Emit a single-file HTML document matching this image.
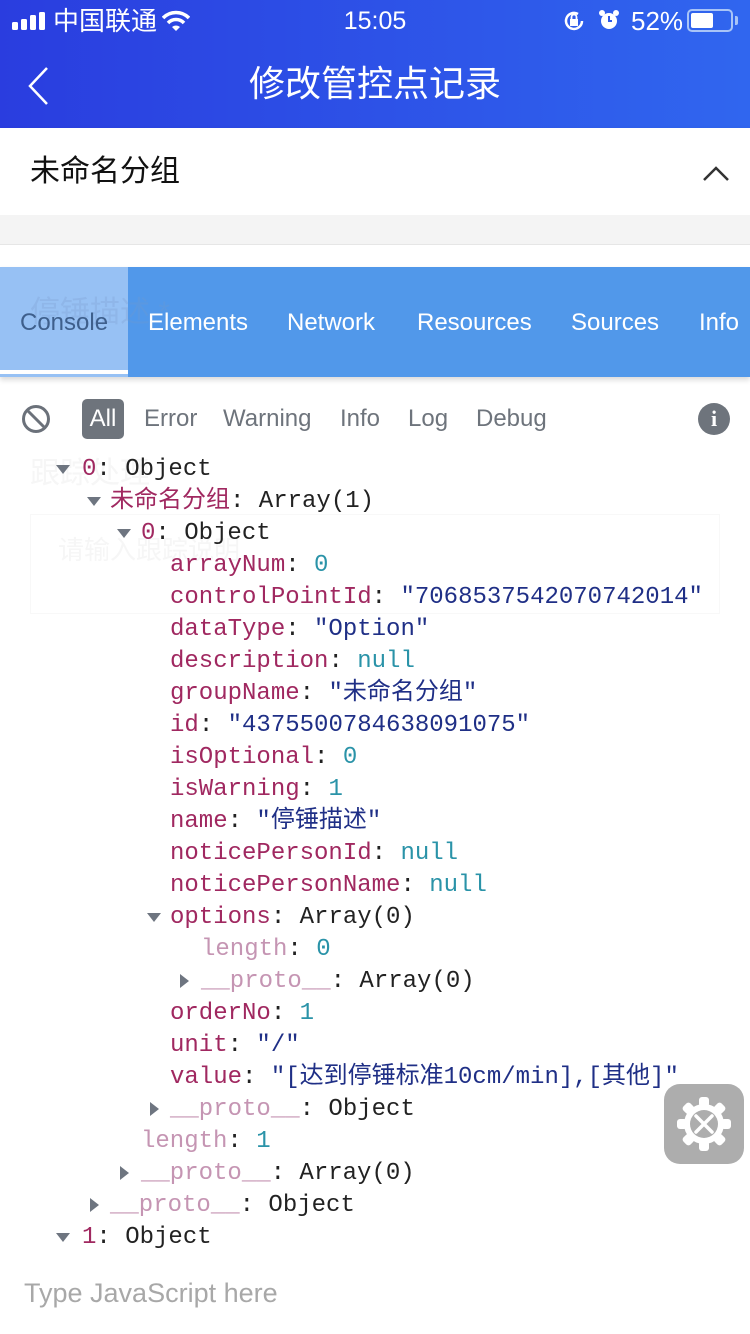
<!DOCTYPE html>
<html><head><meta charset="utf-8">
<style>
*{margin:0;padding:0;box-sizing:border-box}
body{width:750px;height:1334px;position:relative;overflow:hidden;background:#fff;font-family:"Liberation Sans","Noto Sans CJK SC",sans-serif}
.hdr{position:absolute;left:0;top:0;width:750px;height:128px;background:linear-gradient(90deg,#2a3ddf,#3066ef)}
.sb{position:absolute;top:6px;color:#fff;font-size:26px;line-height:30px}
.title{position:absolute;top:62px;left:0;width:750px;text-align:center;color:#fff;font-size:36px;line-height:44px}
.sec{position:absolute;left:0;top:128px;width:750px;height:87px;background:#fff;box-shadow:0 3px 6px rgba(0,0,0,.12)}
.gap{position:absolute;left:0;top:215px;width:750px;height:30px;background:#f4f4f4;border-bottom:1px solid #e6e6e6}
.tabs{position:absolute;left:0;top:267px;width:750px;height:110px;background:#5198ea;box-shadow:0 3px 5px rgba(0,0,0,.15)}
.tab{position:absolute;top:41px;color:#fff;font-size:24px;line-height:30px}
.ln{position:absolute;font-family:"Liberation Mono","Noto Sans CJK SC",monospace;font-size:24px;line-height:32px;white-space:pre;color:#222}
.k{color:#a02860}.p{color:#c595b3}.s{color:#1f2f86}.n{color:#2a93a8}
.tri{position:absolute;width:0;height:0}
.td{border-left:7px solid transparent;border-right:7px solid transparent;border-top:9px solid #6e7580}
.tr{border-top:7px solid transparent;border-bottom:7px solid transparent;border-left:9px solid #6e7580}
.ghost{position:absolute;color:#f6f6f6;font-size:30px}
.f{position:absolute;top:404px;font-size:24px;line-height:30px;color:#6e747c}
</style></head><body>
<div class="hdr">
 <svg style="position:absolute;left:12px;top:12px" width="36" height="18"><rect x="0" y="10" width="6" height="8" rx="1.5" fill="#fff"/><rect x="9" y="7" width="6" height="11" rx="1.5" fill="#fff"/><rect x="18" y="3" width="6" height="15" rx="1.5" fill="#fff"/><rect x="27" y="0" width="6" height="18" rx="1.5" fill="#fff"/></svg>
 <div class="sb" style="left:53px">中国联通</div>
 <svg style="position:absolute;left:162px;top:10px" width="28" height="22" viewBox="0 0 28 22"><path d="M1 8 A18 18 0 0 1 27 8" stroke="#fff" stroke-width="3.5" fill="none"/><path d="M6 13 A11 11 0 0 1 22 13" stroke="#fff" stroke-width="3.5" fill="none"/><path d="M10 17 L14 21 L18 17 A6 6 0 0 0 10 17Z" fill="#fff"/></svg>
 <div class="sb" style="left:0;width:750px;text-align:center;font-size:25px">15:05</div>
 <svg style="position:absolute;left:562px;top:9px" width="24" height="24" viewBox="0 0 24 24"><path d="M20 12A8 8 0 1 1 16 5" stroke="#fff" stroke-width="2.5" fill="none"/><rect x="8" y="10" width="8" height="7" fill="#fff"/><path d="M9.5 10V8a2.5 2.5 0 0 1 5 0v2" stroke="#fff" stroke-width="1.8" fill="none"/></svg>
 <svg style="position:absolute;left:597px;top:8px" width="24" height="24" viewBox="0 0 24 24"><circle cx="12" cy="13" r="8" fill="#fff"/><path d="M12 8v5h3" stroke="#2f5ae8" stroke-width="2" fill="none"/><circle cx="5" cy="5" r="3" fill="#fff"/><circle cx="19" cy="5" r="3" fill="#fff"/></svg>
 <div class="sb" style="left:631px">52%</div>
 <div style="position:absolute;left:687px;top:9px;width:46px;height:23px;border:2px solid #a8c4f7;border-radius:5px"><div style="position:absolute;left:2px;top:2px;width:22px;height:15px;background:#fff;border-radius:2px"></div></div>
 <div style="position:absolute;left:735px;top:16px;width:3px;height:9px;background:#a8c4f7;border-radius:0 2px 2px 0"></div>
 <svg style="position:absolute;left:26px;top:66px" width="24" height="40"><path d="M21 2 L4 20 L21 38" stroke="#fff" stroke-width="2.5" fill="none"/></svg>
 <div class="title">修改管控点记录</div>
</div>
<div class="sec">
 <div style="position:absolute;left:30px;top:24px;font-size:30px;line-height:40px;color:#111">未命名分组</div>
 <svg style="position:absolute;left:702px;top:36px" width="28" height="18"><path d="M2 16 L14 4 L26 16" stroke="#333" stroke-width="2.5" fill="none"/></svg>
</div>
<div class="gap"></div>
<div class="ghost" style="left:30px;top:448px">跟踪处理</div>
<div class="ghost" style="left:58px;top:530px;font-size:26px">请输入跟踪说明</div>
<div style="position:absolute;left:30px;top:514px;width:690px;height:100px;border:1px solid #f8f8f8"></div>
<div class="tabs">
 <div style="position:absolute;left:0;top:0;width:128px;height:110px;background:#97c1f4"></div>
 <div style="position:absolute;left:0;top:103px;width:128px;height:4px;background:#fff"></div>
 <div style="position:absolute;left:30px;top:20px;font-size:30px;color:rgba(120,150,200,.25)">停锤描述 *</div>
 <div class="tab" style="left:20px;color:#3e5f8c">Console</div>
 <div class="tab" style="left:148px">Elements</div>
 <div class="tab" style="left:287px">Network</div>
 <div class="tab" style="left:417px">Resources</div>
 <div class="tab" style="left:571px">Sources</div>
 <div class="tab" style="left:699px">Info</div>
</div>
<svg style="position:absolute;left:21px;top:404px" width="30" height="30" viewBox="0 0 30 30"><circle cx="15" cy="15" r="12.5" stroke="#6b717a" stroke-width="3" fill="none"/><path d="M6 6 L24 24" stroke="#6b717a" stroke-width="3"/></svg>
<div style="position:absolute;left:82px;top:399px;width:42px;height:40px;background:#6e747c;border-radius:5px;color:#fff;font-size:24px;line-height:40px;text-align:center">All</div>
<div class="f" style="left:144px">Error</div>
<div class="f" style="left:223px">Warning</div>
<div class="f" style="left:340px">Info</div>
<div class="f" style="left:408px">Log</div>
<div class="f" style="left:476px">Debug</div>
<div style="position:absolute;left:698px;top:403px;width:32px;height:32px;border-radius:50%;background:#6e747c;color:#fff;font-weight:bold;font-size:22px;line-height:32px;text-align:center;font-family:'Liberation Serif',serif">i</div>

<div class="tri td" style="left:56px;top:465px"></div><div class="ln" style="left:82px;top:454px"><span class="k">0</span>: Object</div>
<div class="tri td" style="left:87px;top:497px"></div><div class="ln" style="left:110px;top:486px"><span class="k">未命名分组</span>: Array(1)</div>
<div class="tri td" style="left:117px;top:529px"></div><div class="ln" style="left:141px;top:518px"><span class="k">0</span>: Object</div>
<div class="ln" style="left:170px;top:550px"><span class="k">arrayNum</span>: <span class="n">0</span></div>
<div class="ln" style="left:170px;top:582px"><span class="k">controlPointId</span>: <span class="s">"7068537542070742014"</span></div>
<div class="ln" style="left:170px;top:614px"><span class="k">dataType</span>: <span class="s">"Option"</span></div>
<div class="ln" style="left:170px;top:646px"><span class="k">description</span>: <span class="n">null</span></div>
<div class="ln" style="left:170px;top:678px"><span class="k">groupName</span>: <span class="s">"未命名分组"</span></div>
<div class="ln" style="left:170px;top:710px"><span class="k">id</span>: <span class="s">"4375500784638091075"</span></div>
<div class="ln" style="left:170px;top:742px"><span class="k">isOptional</span>: <span class="n">0</span></div>
<div class="ln" style="left:170px;top:774px"><span class="k">isWarning</span>: <span class="n">1</span></div>
<div class="ln" style="left:170px;top:806px"><span class="k">name</span>: <span class="s">"停锤描述"</span></div>
<div class="ln" style="left:170px;top:838px"><span class="k">noticePersonId</span>: <span class="n">null</span></div>
<div class="ln" style="left:170px;top:870px"><span class="k">noticePersonName</span>: <span class="n">null</span></div>
<div class="tri td" style="left:147px;top:913px"></div><div class="ln" style="left:170px;top:902px"><span class="k">options</span>: Array(0)</div>
<div class="ln" style="left:201px;top:934px"><span class="p">length</span>: <span class="n">0</span></div>
<div class="tri tr" style="left:180px;top:974px"></div><div class="ln" style="left:201px;top:966px"><span class="p">__proto__</span>: Array(0)</div>
<div class="ln" style="left:170px;top:998px"><span class="k">orderNo</span>: <span class="n">1</span></div>
<div class="ln" style="left:170px;top:1030px"><span class="k">unit</span>: <span class="s">"/"</span></div>
<div class="ln" style="left:170px;top:1062px"><span class="k">value</span>: <span class="s">"[达到停锤标准10cm/min],[其他]"</span></div>
<div class="tri tr" style="left:150px;top:1102px"></div><div class="ln" style="left:170px;top:1094px"><span class="p">__proto__</span>: Object</div>
<div class="ln" style="left:141px;top:1126px"><span class="p">length</span>: <span class="n">1</span></div>
<div class="tri tr" style="left:120px;top:1166px"></div><div class="ln" style="left:141px;top:1158px"><span class="p">__proto__</span>: Array(0)</div>
<div class="tri tr" style="left:90px;top:1198px"></div><div class="ln" style="left:110px;top:1190px"><span class="p">__proto__</span>: Object</div>
<div class="tri td" style="left:56px;top:1233px"></div><div class="ln" style="left:82px;top:1222px"><span class="k">1</span>: Object</div>

<div style="position:absolute;left:24px;top:1276px;font-size:27px;line-height:34px;color:#a8a8a8">Type JavaScript here</div>

<div style="position:absolute;left:664px;top:1084px;width:80px;height:80px;border-radius:16px;background:#adadad">
 <svg width="80" height="80" viewBox="0 0 80 80">
  <g transform="translate(40,40)">
   <g fill="#fff">
    <rect x="-5" y="-27" width="10" height="10" rx="3"/><rect x="-5" y="-27" width="10" height="10" rx="3" transform="rotate(45)"/><rect x="-5" y="-27" width="10" height="10" rx="3" transform="rotate(90)"/><rect x="-5" y="-27" width="10" height="10" rx="3" transform="rotate(135)"/><rect x="-5" y="-27" width="10" height="10" rx="3" transform="rotate(180)"/><rect x="-5" y="-27" width="10" height="10" rx="3" transform="rotate(225)"/><rect x="-5" y="-27" width="10" height="10" rx="3" transform="rotate(270)"/><rect x="-5" y="-27" width="10" height="10" rx="3" transform="rotate(315)"/>
    <circle r="20"/>
   </g>
   <circle r="14" fill="#adadad"/>
   <path d="M-8 -8 L8 8 M8 -8 L-8 8" stroke="#fff" stroke-width="3.5" stroke-linecap="round"/>
  </g>
 </svg>
</div>
</body></html>
